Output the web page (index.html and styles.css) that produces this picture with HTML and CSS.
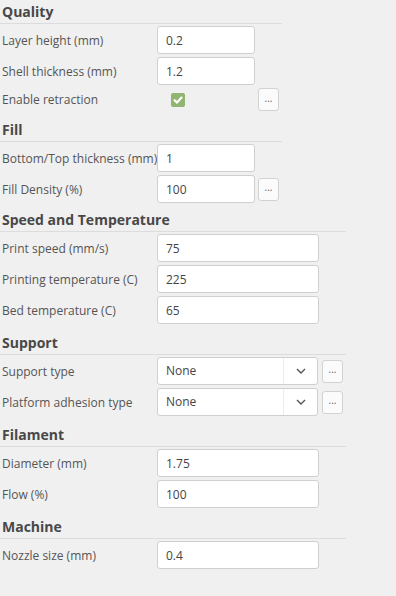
FILE: index.html
```html
<!DOCTYPE html>
<html lang="en">
<head>
    <meta charset="UTF-8">
    <meta name="viewport" content="width=device-width, initial-scale=1.0">
    <title>Print Settings</title>
    <link rel="stylesheet" href="styles.css">
</head>
<body>
    <div class="settings">
        <div class="group">
            <h2>Quality</h2>
            <div class="rows">
                <label>Layer height (mm)</label>
                <input type="text" value="0.2">
                <span></span>
                <label>Shell thickness (mm)</label>
                <input type="text" value="1.2">
                <span></span>
                <label class="short">Enable retraction</label>
                <div class="check-cell"><span class="checkbox"><svg viewBox="0 0 14 14" width="14" height="14"><path d="M3.5 7.2 L6 9.6 L10.6 4.6" fill="none" stroke="#fff" stroke-width="2.2" stroke-linecap="round" stroke-linejoin="round"/></svg></span></div>
                <button class="more">...</button>
            </div>
        </div>
        <div class="group">
            <h2>Fill</h2>
            <div class="rows">
                <label>Bottom/Top thickness (mm)</label>
                <input type="text" value="1">
                <span></span>
                <label>Fill Density (%)</label>
                <input type="text" value="100">
                <button class="more">...</button>
            </div>
        </div>
        <div class="group wide tight">
            <h2>Speed and Temperature</h2>
            <div class="rows">
                <label>Print speed (mm/s)</label>
                <input type="text" value="75">
                <span></span>
                <label>Printing temperature (C)</label>
                <input type="text" value="225">
                <span></span>
                <label>Bed temperature (C)</label>
                <input type="text" value="65">
                <span></span>
            </div>
        </div>
        <div class="group wide">
            <h2>Support</h2>
            <div class="rows">
                <label>Support type</label>
                <div class="select"><span class="select-value">None</span><span class="select-arrow"><svg viewBox="0 0 10 6" width="10" height="6"><path d="M1 1 L5 5 L9 1" fill="none" stroke="#555" stroke-width="1.4"/></svg></span></div>
                <button class="more">...</button>
                <label>Platform adhesion type</label>
                <div class="select"><span class="select-value">None</span><span class="select-arrow"><svg viewBox="0 0 10 6" width="10" height="6"><path d="M1 1 L5 5 L9 1" fill="none" stroke="#555" stroke-width="1.4"/></svg></span></div>
                <button class="more">...</button>
            </div>
        </div>
        <div class="group wide">
            <h2>Filament</h2>
            <div class="rows">
                <label>Diameter (mm)</label>
                <input type="text" value="1.75">
                <span></span>
                <label>Flow (%)</label>
                <input type="text" value="100">
                <span></span>
            </div>
        </div>
        <div class="group wide">
            <h2>Machine</h2>
            <div class="rows">
                <label>Nozzle size (mm)</label>
                <input type="text" value="0.4">
                <span></span>
            </div>
        </div>
    </div>
</body>
</html>
```

FILE: styles.css
```css
html, body { margin: 0; padding: 0; }
body { font-family: "Open Sans", "Noto Sans", sans-serif; background-color: #f0f0f0; color: #555; font-size: 12px; width: 396px; height: 596px; overflow: hidden; }
.settings { padding: 0; }
.group { width: 282px; margin-top: 7px; }
.group:first-child { margin-top: 0; }
.group.wide { width: 346px; }
.group.tight { margin-top: 5px; }
h2 { margin: 0; padding-left: 2px; height: 23px; line-height: 23px; font-size: 14px; font-weight: 700; color: #484848; border-bottom: 1px solid #dcdcdc; }
.rows { display: grid; grid-template-columns: 154px 98px 21px; column-gap: 3px; row-gap: 3px; padding-top: 2px; align-items: center; }
.group.wide .rows { grid-template-columns: 154px 162px 21px; }
.rows label { padding-left: 2px; white-space: nowrap; color: #555; }
.rows input { box-sizing: border-box; height: 28px; width: 100%; margin: 0; padding: 0 8px; border: 1px solid #cfcfcf; border-radius: 3px; background: #fff; font-family: inherit; font-size: 12px; color: #444; outline: none; }
.check-cell { height: 23px; display: flex; align-items: center; padding-left: 14px; }
.checkbox { width: 14px; height: 14px; border-radius: 2px; background: #8fb570; display: block; }
.checkbox svg { display: block; }
.more { box-sizing: border-box; width: 21px; height: 23px; padding: 0 0 4px; border: 1px solid #d2d2d2; border-radius: 3px; background: #fbfbfb; color: #666; font-family: inherit; font-size: 10px; line-height: 1; display: flex; align-items: center; justify-content: center; }
.select { box-sizing: border-box; height: 28px; width: 161px; display: flex; border: 1px solid #cfcfcf; border-radius: 3px; background: #fff; }
.select-value { flex: 1; padding-left: 8px; line-height: 26px; color: #444; }
.select-arrow { width: 33px; border-left: 1px solid #ececec; display: flex; align-items: center; justify-content: center; }
.select-arrow svg { display: block; }
```
